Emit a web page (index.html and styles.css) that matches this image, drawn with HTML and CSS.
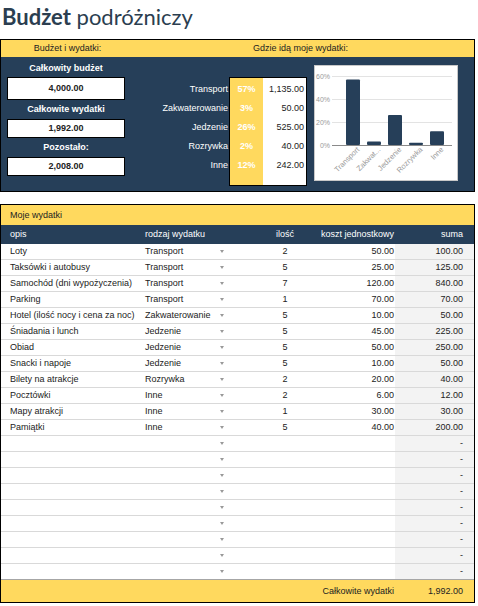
FILE: index.html
```html
<!DOCTYPE html>
<html lang="pl">
<head>
    <meta charset="UTF-8">
    <meta name="viewport" content="width=device-width, initial-scale=1.0">
    <title>Budżet podróżniczy</title>
    <link rel="stylesheet" href="styles.css">
</head>
<body>
    <h1 class="title"><b>Budżet</b> podróżniczy</h1>

    <section class="summary">
        <div class="band">
            <span class="band-left">Budżet i wydatki:</span>
            <span class="band-right">Gdzie idą moje wydatki:</span>
        </div>
        <div class="summary-body">
            <div class="totals">
                <div class="total-label first">Całkowity budżet</div>
                <div class="total-box big">4,000.00</div>
                <div class="total-label">Całkowite wydatki</div>
                <div class="total-box">1,992.00</div>
                <div class="total-label">Pozostało:</div>
                <div class="total-box">2,008.00</div>
            </div>

            <div class="cat-labels">
                <div>Transport</div>
                <div>Zakwaterowanie</div>
                <div>Jedzenie</div>
                <div>Rozrywka</div>
                <div>Inne</div>
            </div>

            <div class="cat-table">
                <div class="cat-pct">
                    <div>57%</div>
                    <div>3%</div>
                    <div>26%</div>
                    <div>2%</div>
                    <div>12%</div>
                </div>
                <div class="cat-val">
                    <div>1,135.00</div>
                    <div>50.00</div>
                    <div>525.00</div>
                    <div>40.00</div>
                    <div>242.00</div>
                </div>
            </div>

            <div class="chart">
                <svg width="142" height="114" viewBox="0 0 142 114">
                    <line class="gridline" x1="17" y1="10.5" x2="137" y2="10.5"/>
                    <line class="gridline" x1="17" y1="33.5" x2="137" y2="33.5"/>
                    <line class="gridline" x1="17" y1="56.5" x2="137" y2="56.5"/>
                    <text class="tick" x="15" y="12.5" text-anchor="end">60%</text>
                    <text class="tick" x="15" y="35.5" text-anchor="end">40%</text>
                    <text class="tick" x="15" y="58.5" text-anchor="end">20%</text>
                    <text class="tick" x="15" y="81.5" text-anchor="end">0%</text>

                    <rect class="bar" x="31" y="13.5" width="14" height="65.5" rx="1"/>
                    <rect class="bar" x="52" y="75.5" width="14" height="3.5" rx="1"/>
                    <rect class="bar" x="73" y="49" width="14" height="30" rx="1"/>
                    <rect class="bar" x="94" y="76.7" width="14" height="2.3" rx="1"/>
                    <rect class="bar" x="115" y="65.2" width="14" height="13.8" rx="1"/>
                    <line class="axis" x1="17" y1="79.5" x2="137" y2="79.5"/>

                    <text class="tick cat" text-anchor="end" transform="translate(45,84) rotate(-45)">Transport</text>
                    <text class="tick cat" text-anchor="end" transform="translate(66,84) rotate(-45)">Zakwat...</text>
                    <text class="tick cat" text-anchor="end" transform="translate(87,84) rotate(-45)">Jedzenie</text>
                    <text class="tick cat" text-anchor="end" transform="translate(108,84) rotate(-45)">Rozrywka</text>
                    <text class="tick cat" text-anchor="end" transform="translate(129,84) rotate(-45)">Inne</text>
                </svg>
            </div>
        </div>
    </section>

    <section class="expenses">
        <div class="band tall">Moje wydatki</div>

        <div class="grid-row head">
            <div class="c-opis">opis</div>
            <div class="c-type">rodzaj wydatku</div>
            <div class="c-qty"><span class="head-text">ilość</span></div>
            <div class="c-cost">koszt jednostkowy</div>
            <div class="c-sum">suma</div>
        </div>

        <div class="grid-row row"><div class="c-opis">Loty</div><div class="c-type"><span class="type-name">Transport</span><span class="arrow"></span></div><div class="c-qty">2</div><div class="c-cost">50.00</div><div class="c-sum">100.00</div></div>
        <div class="grid-row row"><div class="c-opis">Taksówki i autobusy</div><div class="c-type"><span class="type-name">Transport</span><span class="arrow"></span></div><div class="c-qty">5</div><div class="c-cost">25.00</div><div class="c-sum">125.00</div></div>
        <div class="grid-row row"><div class="c-opis">Samochód (dni wypożyczenia)</div><div class="c-type"><span class="type-name">Transport</span><span class="arrow"></span></div><div class="c-qty">7</div><div class="c-cost">120.00</div><div class="c-sum">840.00</div></div>
        <div class="grid-row row"><div class="c-opis">Parking</div><div class="c-type"><span class="type-name">Transport</span><span class="arrow"></span></div><div class="c-qty">1</div><div class="c-cost">70.00</div><div class="c-sum">70.00</div></div>
        <div class="grid-row row"><div class="c-opis">Hotel (ilość nocy i cena za noc)</div><div class="c-type"><span class="type-name">Zakwaterowanie</span><span class="arrow"></span></div><div class="c-qty">5</div><div class="c-cost">10.00</div><div class="c-sum">50.00</div></div>
        <div class="grid-row row"><div class="c-opis">Śniadania i lunch</div><div class="c-type"><span class="type-name">Jedzenie</span><span class="arrow"></span></div><div class="c-qty">5</div><div class="c-cost">45.00</div><div class="c-sum">225.00</div></div>
        <div class="grid-row row"><div class="c-opis">Obiad</div><div class="c-type"><span class="type-name">Jedzenie</span><span class="arrow"></span></div><div class="c-qty">5</div><div class="c-cost">50.00</div><div class="c-sum">250.00</div></div>
        <div class="grid-row row"><div class="c-opis">Snacki i napoje</div><div class="c-type"><span class="type-name">Jedzenie</span><span class="arrow"></span></div><div class="c-qty">5</div><div class="c-cost">10.00</div><div class="c-sum">50.00</div></div>
        <div class="grid-row row"><div class="c-opis">Bilety na atrakcje</div><div class="c-type"><span class="type-name">Rozrywka</span><span class="arrow"></span></div><div class="c-qty">2</div><div class="c-cost">20.00</div><div class="c-sum">40.00</div></div>
        <div class="grid-row row"><div class="c-opis">Pocztówki</div><div class="c-type"><span class="type-name">Inne</span><span class="arrow"></span></div><div class="c-qty">2</div><div class="c-cost">6.00</div><div class="c-sum">12.00</div></div>
        <div class="grid-row row"><div class="c-opis">Mapy atrakcji</div><div class="c-type"><span class="type-name">Inne</span><span class="arrow"></span></div><div class="c-qty">1</div><div class="c-cost">30.00</div><div class="c-sum">30.00</div></div>
        <div class="grid-row row"><div class="c-opis">Pamiątki</div><div class="c-type"><span class="type-name">Inne</span><span class="arrow"></span></div><div class="c-qty">5</div><div class="c-cost">40.00</div><div class="c-sum">200.00</div></div>

        <div class="grid-row row"><div class="c-opis"></div><div class="c-type"><span class="type-name"></span><span class="arrow"></span></div><div class="c-qty"></div><div class="c-cost"></div><div class="c-sum">-</div></div>
        <div class="grid-row row"><div class="c-opis"></div><div class="c-type"><span class="type-name"></span><span class="arrow"></span></div><div class="c-qty"></div><div class="c-cost"></div><div class="c-sum">-</div></div>
        <div class="grid-row row"><div class="c-opis"></div><div class="c-type"><span class="type-name"></span><span class="arrow"></span></div><div class="c-qty"></div><div class="c-cost"></div><div class="c-sum">-</div></div>
        <div class="grid-row row"><div class="c-opis"></div><div class="c-type"><span class="type-name"></span><span class="arrow"></span></div><div class="c-qty"></div><div class="c-cost"></div><div class="c-sum">-</div></div>
        <div class="grid-row row"><div class="c-opis"></div><div class="c-type"><span class="type-name"></span><span class="arrow"></span></div><div class="c-qty"></div><div class="c-cost"></div><div class="c-sum">-</div></div>
        <div class="grid-row row"><div class="c-opis"></div><div class="c-type"><span class="type-name"></span><span class="arrow"></span></div><div class="c-qty"></div><div class="c-cost"></div><div class="c-sum">-</div></div>
        <div class="grid-row row"><div class="c-opis"></div><div class="c-type"><span class="type-name"></span><span class="arrow"></span></div><div class="c-qty"></div><div class="c-cost"></div><div class="c-sum">-</div></div>
        <div class="grid-row row"><div class="c-opis"></div><div class="c-type"><span class="type-name"></span><span class="arrow"></span></div><div class="c-qty"></div><div class="c-cost"></div><div class="c-sum">-</div></div>
        <div class="grid-row row last"><div class="c-opis"></div><div class="c-type"><span class="type-name"></span><span class="arrow"></span></div><div class="c-qty"></div><div class="c-cost"></div><div class="c-sum">-</div></div>

        <div class="grid-row foot">
            <div></div>
            <div></div>
            <div></div>
            <div class="c-cost">Całkowite wydatki</div>
            <div class="c-sum">1,992.00</div>
        </div>
    </section>
</body>
</html>
```

FILE: styles.css
```css
* {
    margin: 0;
    padding: 0;
    box-sizing: border-box;
}

body {
    font-family: "Liberation Sans", Arial, sans-serif;
    font-size: 9px;
    color: #222;
    background-color: white;
    width: 475px;
}

.title {
    font-family: Lato, "Open Sans", sans-serif;
    font-size: 22px;
    line-height: 26px;
    font-weight: 400;
    color: #2b3e50;
    padding: 4px 0 0 2px;
    margin-bottom: 9px;
}

.title b {
    font-weight: 700;
}

/* top block */
.summary {
    border: 1px solid #000;
}

.band {
    background-color: #ffd95e;
    height: 17px;
    line-height: 17px;
    display: flex;
    color: #222;
}

.band-left {
    width: 133px;
    text-align: center;
}

.band-right {
    padding-left: 119px;
}

.summary-body {
    background-color: #263f59;
    height: 134px;
    display: flex;
    align-items: flex-start;
    padding-left: 6px;
}

.totals {
    width: 118px;
    padding-top: 2px;
    display: flex;
    flex-direction: column;
}

.total-label {
    height: 19px;
    line-height: 19px;
    text-align: center;
    color: white;
    font-weight: bold;
}

.total-label.first {
    height: 18px;
    line-height: 18px;
}

.total-box {
    background-color: white;
    border: 1px solid #000;
    height: 19px;
    line-height: 17px;
    text-align: center;
    font-weight: bold;
}

.total-box.big {
    height: 23px;
    line-height: 21px;
}

.cat-labels {
    width: 104px;
    margin-top: 23px;
    color: white;
    text-align: right;
}

.cat-labels div {
    height: 19px;
    line-height: 19px;
    padding-right: 1px;
}

.cat-table {
    width: 78px;
    height: 109px;
    margin-top: 20px;
    border: 1px solid #000;
    background-color: white;
    display: flex;
}

.cat-pct {
    width: 33px;
    background-color: #ffd95e;
    padding-top: 2px;
    color: white;
    font-weight: bold;
    text-align: center;
}

.cat-val {
    flex: 1;
    padding-top: 2px;
    padding-right: 2px;
    text-align: right;
}

.cat-pct div,
.cat-val div {
    height: 19px;
    line-height: 19px;
}

.chart {
    width: 144px;
    height: 116px;
    margin: 8px 0 0 7px;
    background-color: white;
    border: 1px solid #c8c8c8;
}

.chart svg {
    display: block;
}

.gridline {
    stroke: #e3e3e3;
    stroke-width: 1;
}

.axis {
    stroke: #8a8a8a;
    stroke-width: 1;
}

.bar {
    fill: #263f59;
}

.tick {
    font-family: "Liberation Sans", Arial, sans-serif;
    font-size: 7px;
    fill: #9a9a9a;
}

.tick.cat {
    font-size: 7.5px;
}

/* expenses table */
.expenses {
    margin-top: 12px;
    border: 1px solid #000;
}

.band.tall {
    height: 20px;
    line-height: 20px;
    padding-left: 9px;
}

.grid-row {
    display: grid;
    grid-template-columns: 139px 122px 46px 87px 79px;
    white-space: nowrap;
}

.grid-row > div {
    overflow: hidden;
}

.head {
    background-color: #263f59;
    color: #ffffff;
    height: 19px;
    line-height: 19px;
}

.head-text {
    color: #ffffff;
}

.row {
    height: 16px;
    line-height: 15px;
    border-bottom: 1px solid #d9d9d9;
}

.row.last {
    border-bottom-color: #a6a6a6;
}

.c-opis {
    padding-left: 9px;
}

.c-type {
    padding-left: 5px;
}

.row .c-type {
    display: flex;
    align-items: center;
}

.type-name {
    width: 75px;
    flex-shrink: 0;
}

.arrow {
    width: 0;
    height: 0;
    border-left: 2.5px solid transparent;
    border-right: 2.5px solid transparent;
    border-top: 3px solid #999;
}

.c-qty {
    text-align: center;
}

.c-cost {
    text-align: right;
    padding-right: 1px;
}

.c-sum {
    text-align: right;
    padding-right: 11px;
}

.row .c-sum {
    background-color: #f3f3f3;
}

.foot {
    background-color: #ffd95e;
    height: 22px;
    line-height: 22px;
}
```
